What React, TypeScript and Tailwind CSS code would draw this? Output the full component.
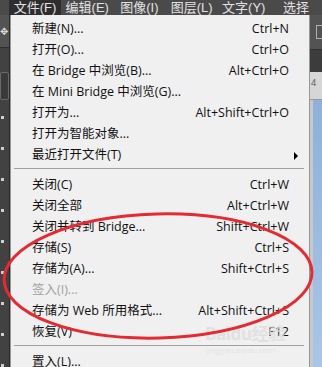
import React from "react";

type Item = {
  label: string;
  shortcut?: string;
  disabled?: boolean;
  submenu?: boolean;
};

const groups: Item[][] = [
  [
    { label: "新建(N)...", shortcut: "Ctrl+N" },
    { label: "打开(O)...", shortcut: "Ctrl+O" },
    { label: "在 Bridge 中浏览(B)...", shortcut: "Alt+Ctrl+O" },
    { label: "在 Mini Bridge 中浏览(G)..." },
    { label: "打开为...", shortcut: "Alt+Shift+Ctrl+O" },
    { label: "打开为智能对象..." },
    { label: "最近打开文件(T)", submenu: true },
  ],
  [
    { label: "关闭(C)", shortcut: "Ctrl+W" },
    { label: "关闭全部", shortcut: "Alt+Ctrl+W" },
    { label: "关闭并转到 Bridge...", shortcut: "Shift+Ctrl+W" },
    { label: "存储(S)", shortcut: "Ctrl+S" },
    { label: "存储为(A)...", shortcut: "Shift+Ctrl+S" },
    { label: "签入(I)...", disabled: true },
    { label: "存储为 Web 所用格式...", shortcut: "Alt+Shift+Ctrl+S" },
    { label: "恢复(V)", shortcut: "F12" },
  ],
  [{ label: "置入(L)..." }],
];

const topMenu = ["编辑(E)", "图像(I)", "图层(L)", "文字(Y)", "选择"];

const MenuRow = ({ item }: { item: Item }) => (
  <div
    className={`flex items-center h-[21px] pl-[21px] pr-[20px] ${
      item.disabled ? "text-[#a0a0a0]" : "text-[#111]"
    }`}
  >
    <span className="flex-1 whitespace-nowrap">{item.label}</span>
    {item.shortcut && <span className="whitespace-nowrap">{item.shortcut}</span>}
    {item.submenu && (
      <span className="w-0 h-0 mr-[-9px] border-y-[4px] border-y-transparent border-l-[4px] border-l-black" />
    )}
  </div>
);

export default function App() {
  return (
    <div
      className="relative w-[322px] h-[367px] overflow-hidden bg-[#3c3c3c] text-[12.5px] leading-none"
      style={{ fontFamily: '"Open Sans", "Noto Sans CJK SC", sans-serif' }}
    >
      {/* Top menu bar */}
      <div
        className="flex h-[15px] bg-[#4a4a4a] text-[#e2e2e2] text-[13px] leading-[15px]"
        style={{ fontFamily: '"Liberation Sans", "Noto Sans CJK SC", sans-serif' }}
      >
        <div className="ml-[9px] w-[55px] bg-[#2e2e2e] text-center whitespace-nowrap">
          文件(F)
        </div>
        {topMenu.map((m) => (
          <div key={m} className="w-[55px] text-center whitespace-nowrap">
            {m}
          </div>
        ))}
      </div>

      <div className="flex h-[352px]">
        {/* left tools strip */}
        <div className="w-[10px] flex flex-col bg-[#424242] border-r border-[#2a2a2a]">
          <div className="h-[35px] bg-[#535353] border-b border-[#2f2f2f] flex items-center text-[#ddd] text-[10px]">
            ✥
          </div>
          <div className="mt-[24px] h-[30px] border border-[#6a6a6a] rounded-[2px] bg-[#3a3a3a]" />
          <div className="flex flex-col gap-[28px] mt-[16px] pl-[1px]">
            {Array.from({ length: 9 }).map((_, i) => (
              <div key={i} className="w-[3px] h-[3px] bg-[#cfcfcf]" />
            ))}
          </div>
        </div>

        {/* dropdown menu */}
        <div className="w-[300px] bg-[#f0f0f0] border-x border-[#979797] pt-[4px]">
          {groups.map((g, gi) => (
            <div key={gi}>
              {gi > 0 && <div className="mt-[2px] mb-[6px] ml-[3px] mr-[5px] h-px bg-[#a0a0a0]" />}
              {g.map((item) => (
                <MenuRow key={item.label} item={item} />
              ))}
            </div>
          ))}
        </div>

        {/* right canvas strip */}
        <div className="flex-1 flex flex-col">
          <div className="h-[35px] bg-[#535353] border-b border-[#2f2f2f] flex items-center justify-end">
            <div className="w-[6px] h-[14px] border border-[#b0b0b0] border-r-0" />
          </div>
          <div className="h-[22px] bg-[#3c3c3c]" />
          <div className="h-[28px] bg-[#d6d6d6] text-[9px] text-[#555] pl-[1px] pt-[6px] border-b border-[#999]">
            4
          </div>
          <div className="flex-1 bg-gradient-to-b from-[#8eb0da] to-[#a9c6e6] border-l-[3px] border-[#c8c8c8]" />
        </div>
      </div>

      {/* watermark */}
      <div className="absolute left-[205px] top-[325px] text-[#dedede] text-[17px] font-bold tracking-tight opacity-80">
        Baidu经验
      </div>
      <div className="absolute left-[207px] top-[346px] text-[#e0e0e0] text-[8px] opacity-80">
        jingyan.baidu.com
      </div>

      {/* red annotation ellipse */}
      <svg className="absolute left-0 top-0" width="322" height="367" viewBox="0 0 322 367">
        <ellipse
          cx="158"
          cy="276"
          rx="154"
          ry="62"
          fill="none"
          stroke="#e42a33"
          strokeWidth="3"
          transform="rotate(-1.5 158 276)"
        />
      </svg>
    </div>
  );
}
